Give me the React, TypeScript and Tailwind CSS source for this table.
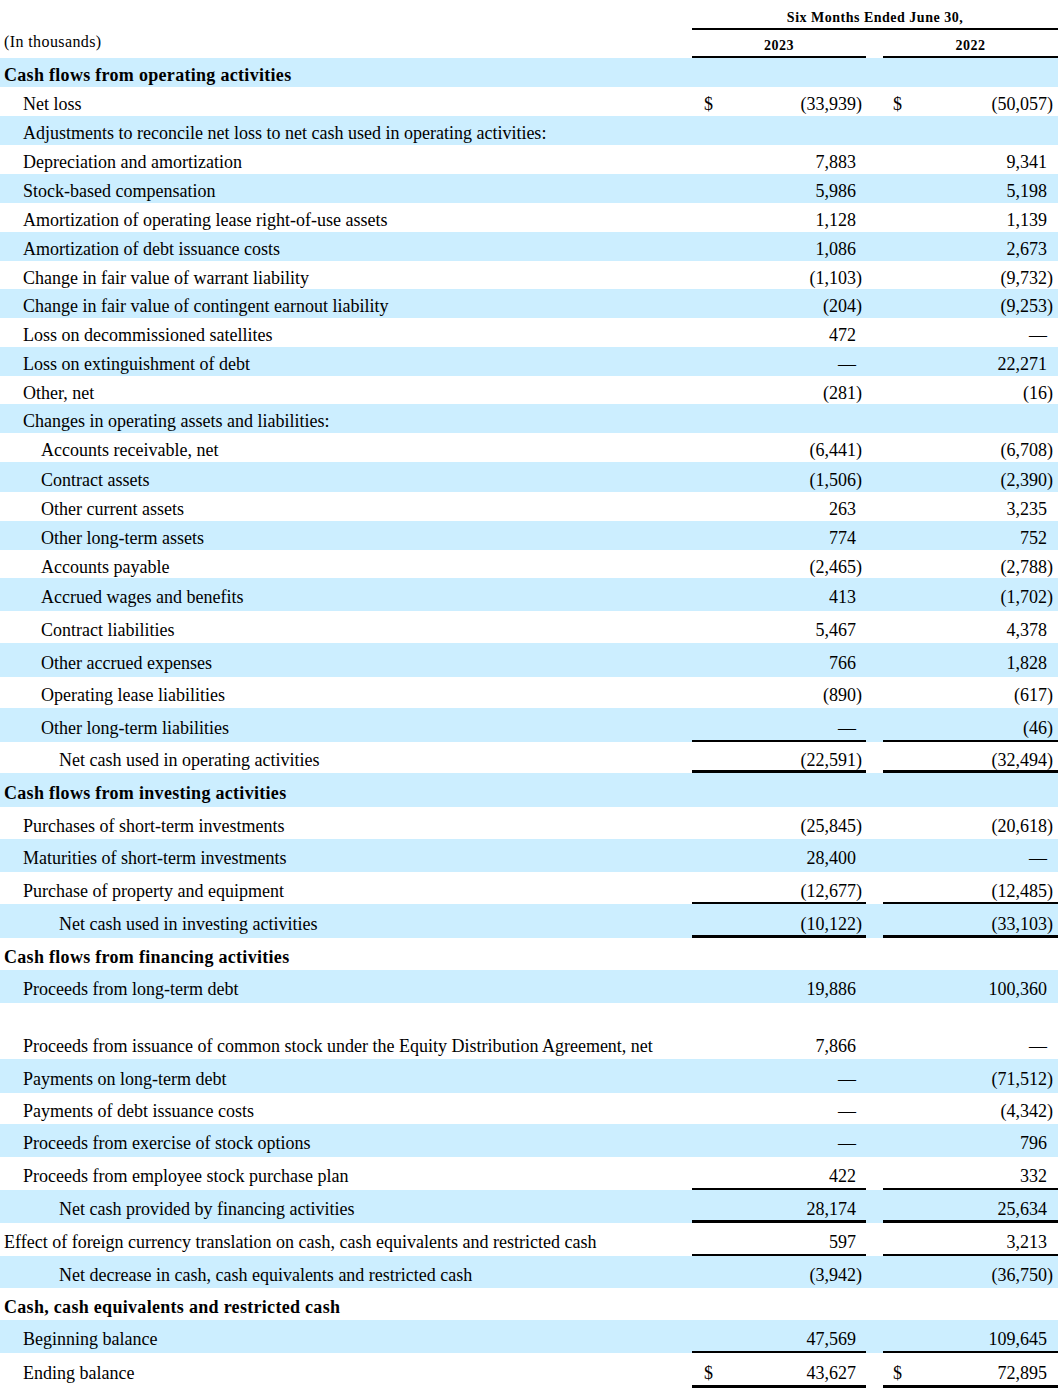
import React from "react";

type Row = {
  label: string;
  lvl?: number;
  bold?: boolean;
  a?: string;
  b?: string;
  dollar?: boolean;
  h: number;
  blue?: boolean;
  line?: "thin" | "thick";
  bottom?: boolean;
};

const rows: Row[] = [
  { label: "Cash flows from operating activities", bold: true, h: 29, blue: true },
  { label: "Net loss", lvl: 1, a: "(33,939)", b: "(50,057)", dollar: true, h: 29 },
  { label: "Adjustments to reconcile net loss to net cash used in operating activities:", lvl: 1, h: 29, blue: true },
  { label: "Depreciation and amortization", lvl: 1, a: "7,883", b: "9,341", h: 29 },
  { label: "Stock-based compensation", lvl: 1, a: "5,986", b: "5,198", h: 29, blue: true },
  { label: "Amortization of operating lease right-of-use assets", lvl: 1, a: "1,128", b: "1,139", h: 29 },
  { label: "Amortization of debt issuance costs", lvl: 1, a: "1,086", b: "2,673", h: 29, blue: true },
  { label: "Change in fair value of warrant liability", lvl: 1, a: "(1,103)", b: "(9,732)", h: 28 },
  { label: "Change in fair value of contingent earnout liability", lvl: 1, a: "(204)", b: "(9,253)", h: 29, blue: true },
  { label: "Loss on decommissioned satellites", lvl: 1, a: "472", b: "—", h: 29 },
  { label: "Loss on extinguishment of debt", lvl: 1, a: "—", b: "22,271", h: 29, blue: true },
  { label: "Other, net", lvl: 1, a: "(281)", b: "(16)", h: 28 },
  { label: "Changes in operating assets and liabilities:", lvl: 1, h: 29, blue: true },
  { label: "Accounts receivable, net", lvl: 2, a: "(6,441)", b: "(6,708)", h: 29 },
  { label: "Contract assets", lvl: 2, a: "(1,506)", b: "(2,390)", h: 30, blue: true },
  { label: "Other current assets", lvl: 2, a: "263", b: "3,235", h: 29 },
  { label: "Other long-term assets", lvl: 2, a: "774", b: "752", h: 29, blue: true },
  { label: "Accounts payable", lvl: 2, a: "(2,465)", b: "(2,788)", h: 28 },
  { label: "Accrued wages and benefits", lvl: 2, a: "413", b: "(1,702)", h: 33, blue: true },
  { label: "Contract liabilities", lvl: 2, a: "5,467", b: "4,378", h: 32 },
  { label: "Other accrued expenses", lvl: 2, a: "766", b: "1,828", h: 34, blue: true },
  { label: "Operating lease liabilities", lvl: 2, a: "(890)", b: "(617)", h: 31 },
  { label: "Other long-term liabilities", lvl: 2, a: "—", b: "(46)", h: 34, blue: true, line: "thin" },
  { label: "Net cash used in operating activities", lvl: 3, a: "(22,591)", b: "(32,494)", h: 31, line: "thick" },
  { label: "Cash flows from investing activities", bold: true, h: 34, blue: true },
  { label: "Purchases of short-term investments", lvl: 1, a: "(25,845)", b: "(20,618)", h: 32 },
  { label: "Maturities of short-term investments", lvl: 1, a: "28,400", b: "—", h: 33, blue: true },
  { label: "Purchase of property and equipment", lvl: 1, a: "(12,677)", b: "(12,485)", h: 32, line: "thin" },
  { label: "Net cash used in investing activities", lvl: 3, a: "(10,122)", b: "(33,103)", h: 34, blue: true, line: "thick" },
  { label: "Cash flows from financing activities", bold: true, h: 32 },
  { label: "Proceeds from long-term debt", lvl: 1, a: "19,886", b: "100,360", h: 33, blue: true },
  { label: "Proceeds from issuance of common stock under the Equity Distribution Agreement, net", lvl: 1, a: "7,866", b: "—", h: 56, bottom: true },
  { label: "Payments on long-term debt", lvl: 1, a: "—", b: "(71,512)", h: 34, blue: true },
  { label: "Payments of debt issuance costs", lvl: 1, a: "—", b: "(4,342)", h: 31 },
  { label: "Proceeds from exercise of stock options", lvl: 1, a: "—", b: "796", h: 33, blue: true },
  { label: "Proceeds from employee stock purchase plan", lvl: 1, a: "422", b: "332", h: 33, line: "thin" },
  { label: "Net cash provided by financing activities", lvl: 3, a: "28,174", b: "25,634", h: 33, blue: true, line: "thick" },
  { label: "Effect of foreign currency translation on cash, cash equivalents and restricted cash", a: "597", b: "3,213", h: 33, line: "thin" },
  { label: "Net decrease in cash, cash equivalents and restricted cash", lvl: 3, a: "(3,942)", b: "(36,750)", h: 32, blue: true },
  { label: "Cash, cash equivalents and restricted cash", bold: true, h: 32 },
  { label: "Beginning balance", lvl: 1, a: "47,569", b: "109,645", h: 33, blue: true, line: "thin" },
  { label: "Ending balance", lvl: 1, a: "43,627", b: "72,895", dollar: true, h: 35, line: "thick" },
];

const indent = ["pl-[4px]", "pl-[23px]", "pl-[41px]", "pl-[59px]"];

function Amount({ v, dollar, line, first, bottom }: { v?: string; dollar?: boolean; line?: string; first: boolean; bottom?: boolean }) {
  const neg = v?.startsWith("(");
  const txt = neg ? v!.slice(0, -1) : v;
  const border =
    line === "thick"
      ? "border-b-[3px] border-black pt-[8px]"
      : line === "thin"
        ? "border-b-2 border-black pt-[7px]"
        : "pt-[5px]";
  return (
    <div
      className={`flex ${bottom ? "items-end pb-[3px]" : `items-center ${border}`} ${first ? "w-[174px] pr-[4px]" : "w-[175px] pr-[5px]"}`}
    >
      {dollar && <span className={first ? "pl-[12px]" : "pl-[10px]"}>$</span>}
      <span className="flex-1 text-right">{txt}</span>
      <span className="w-[6px]">{neg ? ")" : ""}</span>
    </div>
  );
}

export default function App() {
  return (
    <div className="w-[1058px] bg-white text-black font-['Liberation_Serif',serif] text-[18px] leading-[20px]">
      <div className="flex h-[30px]">
        <div className="w-[692px]" />
        <div className="w-[366px] border-b-2 border-black flex items-center justify-center pt-[8px] text-[14px] font-bold tracking-[0.5px]">
          Six Months Ended June 30,
        </div>
      </div>
      <div className="flex h-[28px]">
        <div className="w-[692px] pl-[4px] flex items-center pb-[5px] text-[16px] tracking-[0.4px]">(In thousands)</div>
        <div className="w-[174px] border-b-2 border-black flex items-center justify-center pt-[5px] text-[14px] font-bold tracking-[0.5px]">
          2023
        </div>
        <div className="w-[17px]" />
        <div className="w-[175px] border-b-2 border-black flex items-center justify-center pt-[5px] text-[14px] font-bold tracking-[0.5px]">
          2022
        </div>
      </div>
      {rows.map((r, i) => (
        <div
          key={i}
          className={`flex ${r.blue ? "bg-[#cceeff]" : "bg-white"}`}
          style={{ height: r.h }}
        >
          <div
            className={`w-[692px] flex ${r.bottom ? "items-end pb-[3px]" : "items-center pt-[5px]"} ${indent[r.lvl ?? 0]} ${r.bold ? "font-bold tracking-[0.3px]" : ""}`}
          >
            {r.label}
          </div>
          <Amount v={r.a} dollar={r.dollar} line={r.line} first bottom={r.bottom} />
          <div className="w-[17px]" />
          <Amount v={r.b} dollar={r.dollar} line={r.line} first={false} bottom={r.bottom} />
        </div>
      ))}
    </div>
  );
}
